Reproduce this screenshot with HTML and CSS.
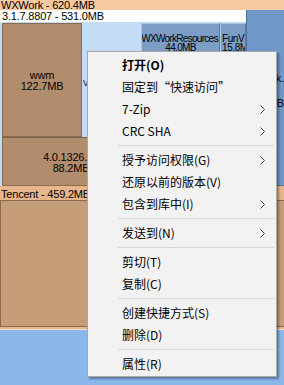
FILE: index.html
```html
<!DOCTYPE html>
<html>
<head>
<meta charset="utf-8">
<link rel="stylesheet" href="styles.css">
</head>
<body>
<div class="screen">
  <div class="tm">
    <div class="tm-head">WXWork - 620.4MB</div>
    <div class="wx">
      <div class="ver">
        <div class="ver-head">3.1.7.8807 - 531.0MB</div>
        <div class="ver-body">
          <div class="blk wwm"><span>wwm</span><span>122.7MB</span></div>
          <div class="lb"><span class="lb-label">v</span></div>
          <div class="col-res">
            <div class="res"><span>WXWorkResources.</span><span>44.0MB</span></div>
            <div class="res-rest"></div>
          </div>
          <div class="col-fun">
            <div class="fun"><span>FunV</span><span>15.8M</span></div>
            <div class="res-rest"></div>
          </div>
        </div>
        <div class="lower">
          <div class="blk v4"><span>4.0.1326.44</span><span>88.2MB</span></div>
          <div class="lower-rest"></div>
        </div>
      </div>
      <div class="side">
        <span class="side-a">Work.</span>
        <span class="side-b">MB</span>
      </div>
    </div>
    <div class="tc-head">Tencent - 459.2MB</div>
    <div class="tc-body"></div>
    <div class="stripe"></div>
    <div class="rest"></div>
  </div>

  <nav class="menu">
    <div class="item bold">打开(O)</div>
    <div class="item">固定到“快速访问”</div>
    <div class="item sub">7-Zip<svg class="chev" width="5" height="9" viewBox="0 0 5 9"><path d="M0.5 0.5 L4.5 4.5 L0.5 8.5" fill="none" stroke="#404040" stroke-width="1"/></svg></div>
    <div class="item sub">CRC SHA<svg class="chev" width="5" height="9" viewBox="0 0 5 9"><path d="M0.5 0.5 L4.5 4.5 L0.5 8.5" fill="none" stroke="#404040" stroke-width="1"/></svg></div>
    <div class="sep"></div>
    <div class="item sub">授予访问权限(G)<svg class="chev" width="5" height="9" viewBox="0 0 5 9"><path d="M0.5 0.5 L4.5 4.5 L0.5 8.5" fill="none" stroke="#404040" stroke-width="1"/></svg></div>
    <div class="item">还原以前的版本(V)</div>
    <div class="item sub">包含到库中(I)<svg class="chev" width="5" height="9" viewBox="0 0 5 9"><path d="M0.5 0.5 L4.5 4.5 L0.5 8.5" fill="none" stroke="#404040" stroke-width="1"/></svg></div>
    <div class="sep"></div>
    <div class="item sub">发送到(N)<svg class="chev" width="5" height="9" viewBox="0 0 5 9"><path d="M0.5 0.5 L4.5 4.5 L0.5 8.5" fill="none" stroke="#404040" stroke-width="1"/></svg></div>
    <div class="sep"></div>
    <div class="item">剪切(T)</div>
    <div class="item">复制(C)</div>
    <div class="sep"></div>
    <div class="item">创建快捷方式(S)</div>
    <div class="item">删除(D)</div>
    <div class="sep"></div>
    <div class="item">属性(R)</div>
  </nav>
</div>
</body>
</html>
```

FILE: styles.css
```css
html, body {
  margin: 0;
  padding: 0;
}
body {
  width: 284px;
  height: 385px;
  overflow: hidden;
  background: #8ab8ec;
}
.screen {
  position: relative;
  width: 284px;
  height: 385px;
  overflow: hidden;
}
.tm {
  display: flex;
  flex-direction: column;
  width: 284px;
  height: 385px;
  font-family: "Liberation Sans", Arial, sans-serif;
  font-size: 11px;
  letter-spacing: -0.2px;
  color: #000;
}
.tm-head {
  height: 10px;
  line-height: 11px;
  padding-left: 1px;
  background: #f6c9a0;
  white-space: nowrap;
  overflow: hidden;
}
.wx {
  display: flex;
  height: 176px;
}
.ver {
  width: 246px;
  display: flex;
  flex-direction: column;
  border-right: 1px solid #4f6f98;
}
.ver-head {
  height: 12px;
  line-height: 13px;
  padding-left: 2px;
  background: #ffffff;
  white-space: nowrap;
  overflow: hidden;
}
.ver-body {
  display: flex;
  height: 114px;
  padding: 1px 0 0 2px;
  background: #c4dcf6;
}
.blk {
  box-sizing: border-box;
  display: flex;
  flex-direction: column;
  align-items: center;
  justify-content: center;
  background: #b28d6d;
  border: 1px solid #8b6b4f;
  line-height: 11px;
  white-space: nowrap;
  overflow: hidden;
}
.wwm {
  width: 80px;
  padding-top: 2px;
}
.lb {
  width: 59px;
  display: flex;
  align-items: center;
  padding-left: 1px;
  box-sizing: border-box;
}
.lb-label {
  color: #1d2f6a;
  margin-top: 4px;
}
.col-res {
  width: 79px;
  display: flex;
  flex-direction: column;
}
.col-fun {
  width: 26px;
  display: flex;
  flex-direction: column;
}
.res, .fun {
  box-sizing: border-box;
  height: 42px;
  display: flex;
  flex-direction: column;
  align-items: center;
  justify-content: center;
  background: #7c9ec6;
  border: 1px solid #5a7ca6;
  border-top-color: #a9c3e3;
  border-left-color: #a9c3e3;
  font-size: 10px;
  line-height: 9px;
  white-space: nowrap;
  overflow: hidden;
  padding-bottom: 2px;
}
.res {
  letter-spacing: -0.7px;
}
.fun {
  align-items: flex-start;
  padding-left: 1px;
  letter-spacing: -0.4px;
}
.res-rest {
  flex: 1;
  background: #7c9ec6;
}
.lower {
  display: flex;
  flex: 1;
  padding-left: 2px;
  background: #c4dcf6;
}
.v4 {
  width: 138px;
  border-top-color: #7e5f45;
  padding-top: 2px;
}
.lower-rest {
  flex: 1;
  background: #7c9ec6;
}
.side {
  flex: 1;
  display: flex;
  flex-direction: column;
  align-items: flex-end;
  background: #6f98c8;
  border-bottom: 1px solid #5a7298;
  padding-top: 63px;
  line-height: 10px;
}
.side-b {
  margin-top: 15px;
}
.tc-head {
  height: 14px;
  line-height: 16px;
  padding-left: 1px;
  background: #e7b68c;
  white-space: nowrap;
  overflow: hidden;
}
.tc-body {
  height: 125px;
  background: #c59d79;
  border-top: 1px solid #8b6b4f;
  border-left: 1px solid #8b6b4f;
  border-bottom: 1px solid #8b6b4f;
}
.stripe {
  height: 2px;
  background: #e7b68c;
  border-bottom: 1px solid #f3dcc6;
}
.rest {
  flex: 1;
  background: #8ab8ec;
}

/* context menu */
.menu {
  position: absolute;
  left: 87px;
  top: 51px;
  width: 188px;
  padding: 2px 0 1px 0;
  background: #f2f2f2;
  border: 1px solid #a8a8a8;
  box-shadow: 2px 2px 2px rgba(0, 0, 0, 0.35);
  font-family: "Noto Sans CJK SC", "Microsoft YaHei", sans-serif;
  font-size: 12px;
  color: #000;
}
.item {
  height: 22px;
  line-height: 22px;
  padding-left: 34px;
  display: flex;
  align-items: center;
  justify-content: space-between;
  padding-right: 11px;
  white-space: nowrap;
}
.bold {
  font-weight: bold;
}
.chev {
  display: block;
}
.sep {
  height: 1px;
  margin: 3px 2px 3px 30px;
  background: #d7d7d7;
}
```
